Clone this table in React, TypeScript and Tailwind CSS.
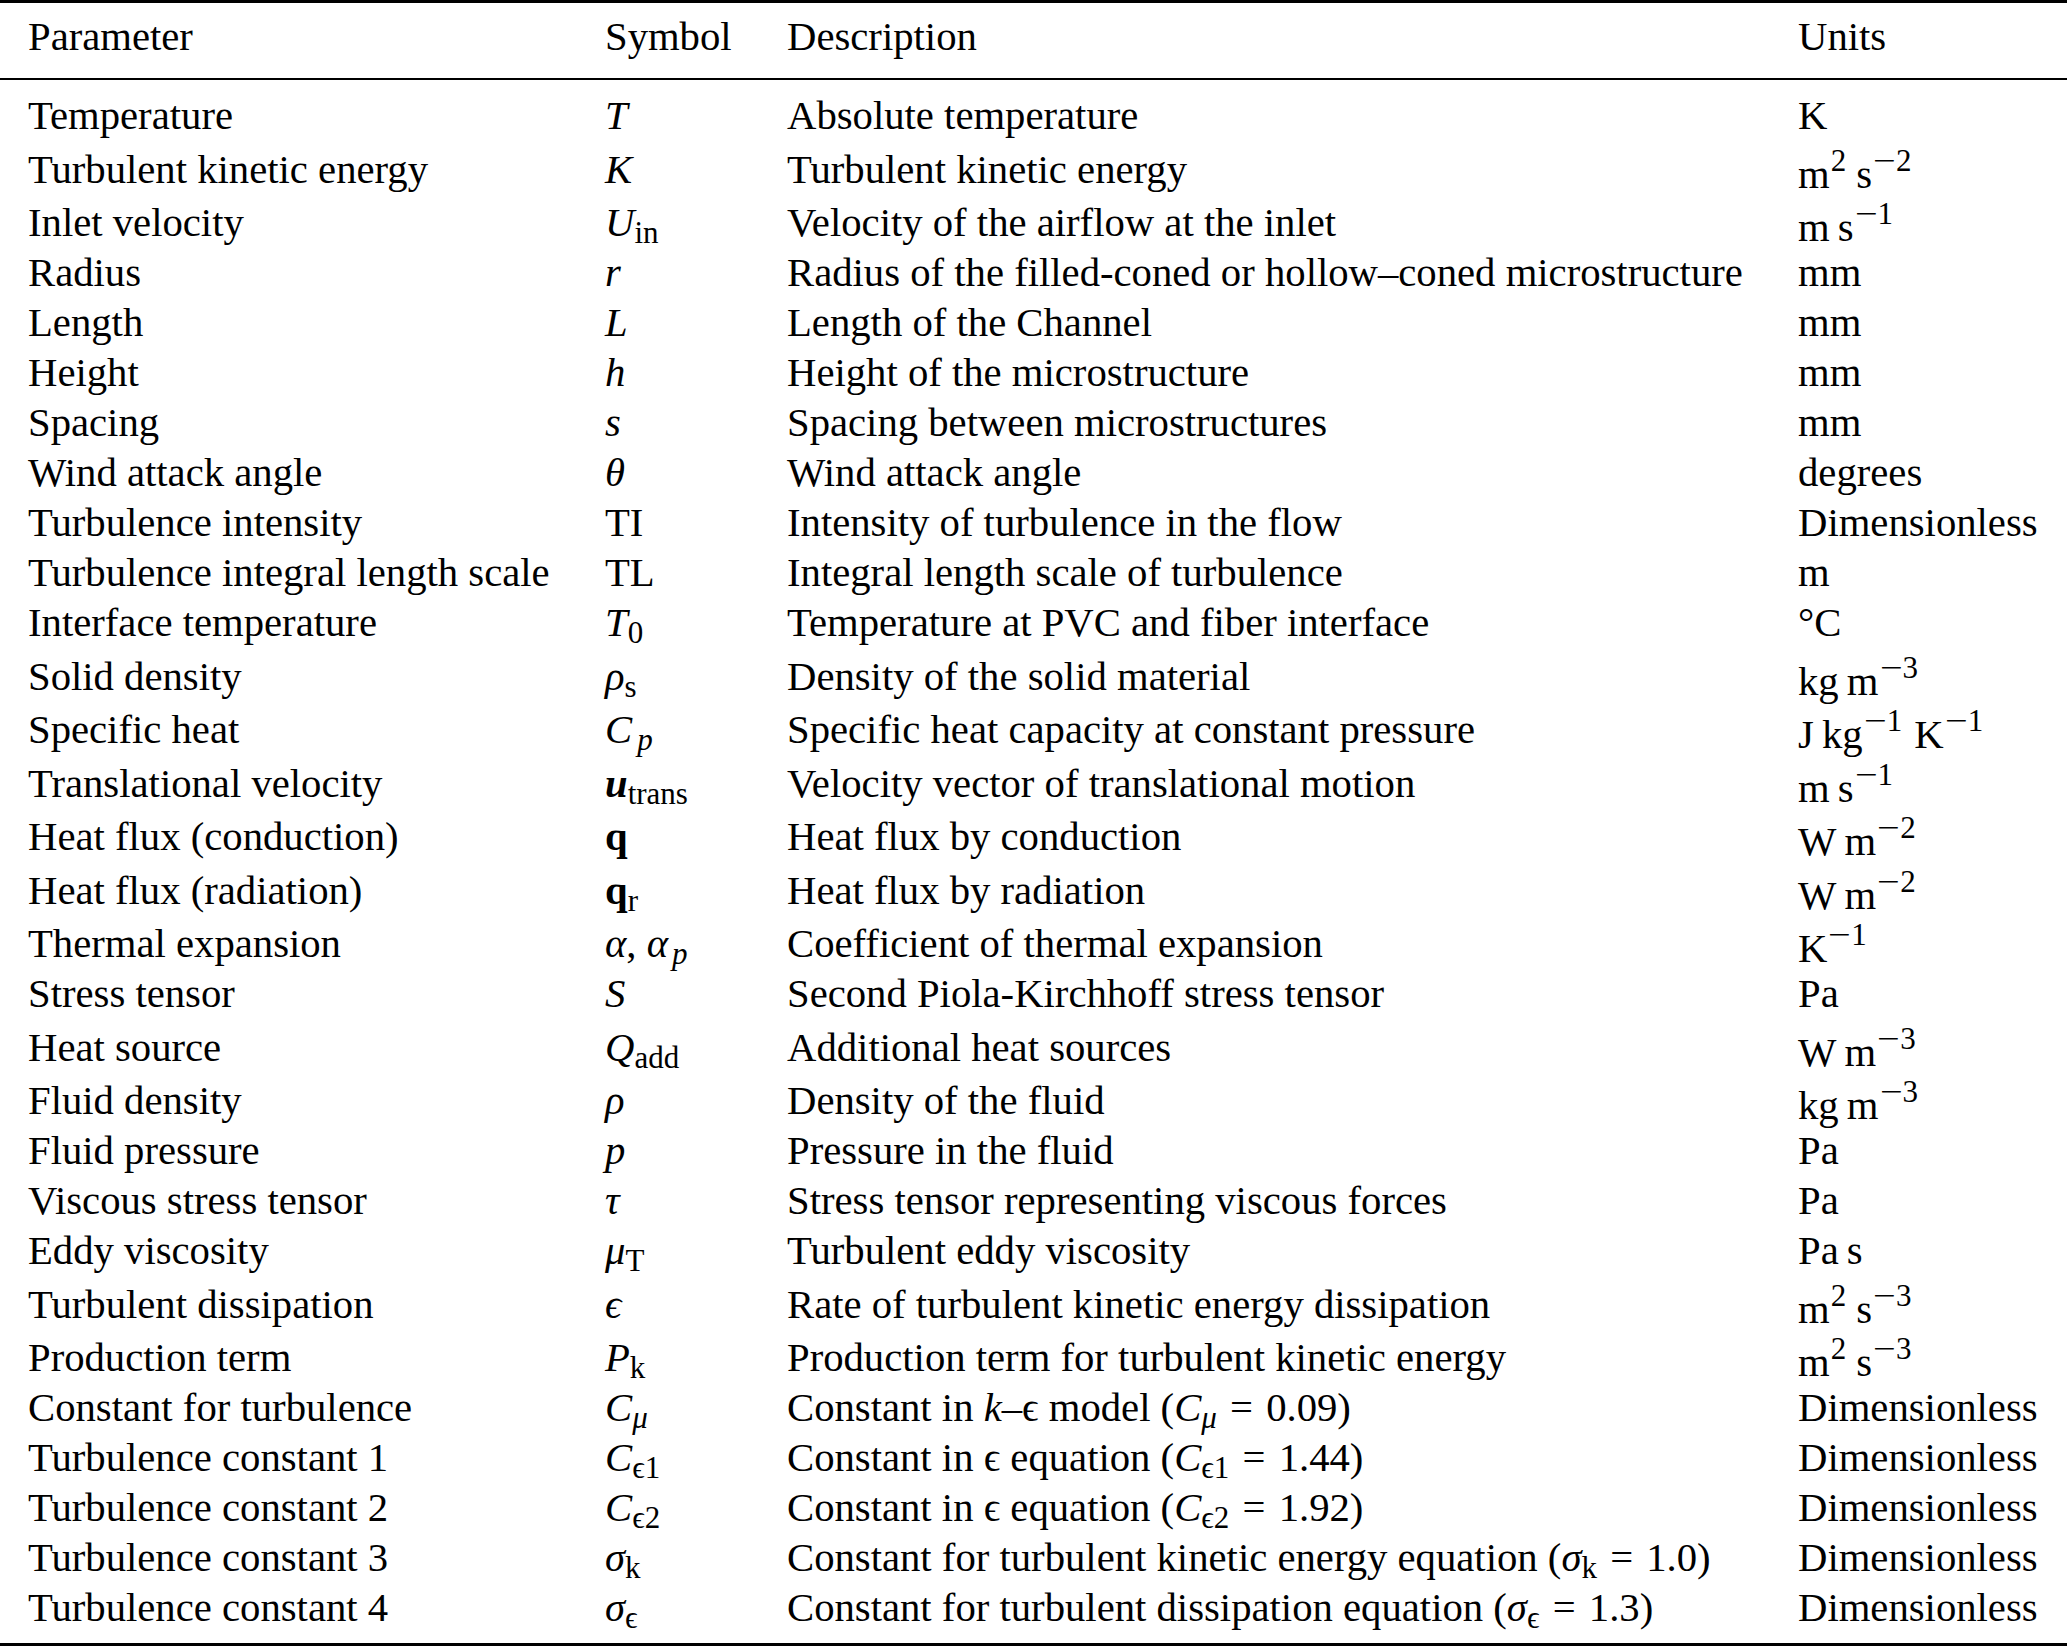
import type { ReactNode } from "react"

// math helpers
function M({ children }: { children: ReactNode }) {
  return <span className="italic">{children}</span>
}

function Sub({ children }: { children: ReactNode }) {
  return <span className="not-italic text-[31px] leading-none align-[-7px] pr-[2px]">{children}</span>
}

function Sup({ children }: { children: ReactNode }) {
  return <span className="not-italic text-[31px] leading-none align-[17px] pl-[1px] pr-[2px]">{children}</span>
}

// TeX minus is a longer bar than the font's
function Minus() {
  return <span className="inline-block w-[0.74em] scale-x-130 text-center">−</span>
}

function Eq({ children }: { children: ReactNode }) {
  return (
    <>
      <span className="pl-[1px] pr-[3px]"> = </span>
      {children}
    </>
  )
}

const eps = "\u03F5"
const thin = "\u2009"

interface RowData {
  param: string
  symbol: ReactNode
  desc: ReactNode
  units: ReactNode
  tall?: boolean
}

const rows: RowData[] = [
  { param: "Temperature", symbol: <M>T</M>, desc: "Absolute temperature", units: "K" },
  {
    param: "Turbulent kinetic energy",
    symbol: <M>K</M>,
    desc: "Turbulent kinetic energy",
    units: (
      <>
        m<Sup>2</Sup>
        {thin}s
        <Sup>
          <Minus />2
        </Sup>
      </>
    ),
    tall: true,
  },
  {
    param: "Inlet velocity",
    symbol: (
      <>
        <M>U</M>
        <Sub>in</Sub>
      </>
    ),
    desc: "Velocity of the airflow at the inlet",
    units: (
      <>
        m{thin}s
        <Sup>
          <Minus />1
        </Sup>
      </>
    ),
    tall: true,
  },
  { param: "Radius", symbol: <M>r</M>, desc: "Radius of the filled-coned or hollow–coned microstructure", units: "mm" },
  { param: "Length", symbol: <M>L</M>, desc: "Length of the Channel", units: "mm" },
  { param: "Height", symbol: <M>h</M>, desc: "Height of the microstructure", units: "mm" },
  { param: "Spacing", symbol: <M>s</M>, desc: "Spacing between microstructures", units: "mm" },
  { param: "Wind attack angle", symbol: <M>θ</M>, desc: "Wind attack angle", units: "degrees" },
  { param: "Turbulence intensity", symbol: "TI", desc: "Intensity of turbulence in the flow", units: "Dimensionless" },
  { param: "Turbulence integral length scale", symbol: "TL", desc: "Integral length scale of turbulence", units: "m" },
  {
    param: "Interface temperature",
    symbol: (
      <>
        <M>T</M>
        <Sub>0</Sub>
      </>
    ),
    desc: "Temperature at PVC and fiber interface",
    units: "°C",
  },
  {
    param: "Solid density",
    symbol: (
      <>
        <M>ρ</M>
        <Sub>s</Sub>
      </>
    ),
    desc: "Density of the solid material",
    units: (
      <>
        kg{thin}m
        <Sup>
          <Minus />3
        </Sup>
      </>
    ),
    tall: true,
  },
  {
    param: "Specific heat",
    symbol: (
      <>
        <M>C</M>
        <Sub>
          <span className="italic pl-[5px]">p</span>
        </Sub>
      </>
    ),
    desc: "Specific heat capacity at constant pressure",
    units: (
      <>
        J{thin}kg
        <Sup>
          <Minus />1
        </Sup>{" "}
        K
        <Sup>
          <Minus />1
        </Sup>
      </>
    ),
    tall: true,
  },
  {
    param: "Translational velocity",
    symbol: (
      <>
        <span className="italic font-bold">u</span>
        <Sub>trans</Sub>
      </>
    ),
    desc: "Velocity vector of translational motion",
    units: (
      <>
        m{thin}s
        <Sup>
          <Minus />1
        </Sup>
      </>
    ),
    tall: true,
  },
  {
    param: "Heat flux (conduction)",
    symbol: <span className="font-bold">q</span>,
    desc: "Heat flux by conduction",
    units: (
      <>
        W{thin}m
        <Sup>
          <Minus />2
        </Sup>
      </>
    ),
    tall: true,
  },
  {
    param: "Heat flux (radiation)",
    symbol: (
      <>
        <span className="font-bold">q</span>
        <Sub>r</Sub>
      </>
    ),
    desc: "Heat flux by radiation",
    units: (
      <>
        W{thin}m
        <Sup>
          <Minus />2
        </Sup>
      </>
    ),
    tall: true,
  },
  {
    param: "Thermal expansion",
    symbol: (
      <>
        <M>α</M>, <M>α</M>
        <Sub>
          <span className="italic pl-[4px]">p</span>
        </Sub>
      </>
    ),
    desc: "Coefficient of thermal expansion",
    units: (
      <>
        K
        <Sup>
          <Minus />1
        </Sup>
      </>
    ),
    tall: true,
  },
  { param: "Stress tensor", symbol: <M>S</M>, desc: "Second Piola-Kirchhoff stress tensor", units: "Pa" },
  {
    param: "Heat source",
    symbol: (
      <>
        <M>Q</M>
        <Sub>add</Sub>
      </>
    ),
    desc: "Additional heat sources",
    units: (
      <>
        W{thin}m
        <Sup>
          <Minus />3
        </Sup>
      </>
    ),
    tall: true,
  },
  {
    param: "Fluid density",
    symbol: <M>ρ</M>,
    desc: "Density of the fluid",
    units: (
      <>
        kg{thin}m
        <Sup>
          <Minus />3
        </Sup>
      </>
    ),
    tall: true,
  },
  { param: "Fluid pressure", symbol: <M>p</M>, desc: "Pressure in the fluid", units: "Pa" },
  { param: "Viscous stress tensor", symbol: <M>τ</M>, desc: "Stress tensor representing viscous forces", units: "Pa" },
  {
    param: "Eddy viscosity",
    symbol: (
      <>
        <M>μ</M>
        <Sub>T</Sub>
      </>
    ),
    desc: "Turbulent eddy viscosity",
    units: <>Pa{thin}s</>,
  },
  {
    param: "Turbulent dissipation",
    symbol: <M>{eps}</M>,
    desc: "Rate of turbulent kinetic energy dissipation",
    units: (
      <>
        m<Sup>2</Sup>
        {thin}s
        <Sup>
          <Minus />3
        </Sup>
      </>
    ),
    tall: true,
  },
  {
    param: "Production term",
    symbol: (
      <>
        <M>P</M>
        <Sub>k</Sub>
      </>
    ),
    desc: "Production term for turbulent kinetic energy",
    units: (
      <>
        m<Sup>2</Sup>
        {thin}s
        <Sup>
          <Minus />3
        </Sup>
      </>
    ),
    tall: true,
  },
  {
    param: "Constant for turbulence",
    symbol: (
      <>
        <M>C</M>
        <Sub>
          <span className="italic">μ</span>
        </Sub>
      </>
    ),
    desc: (
      <>
        Constant in <M>k</M>–{eps} model (<M>C</M>
        <Sub>
          <span className="italic">μ</span>
        </Sub>
        <Eq>0.09)</Eq>
      </>
    ),
    units: "Dimensionless",
  },
  {
    param: "Turbulence constant 1",
    symbol: (
      <>
        <M>C</M>
        <Sub>{eps}1</Sub>
      </>
    ),
    desc: (
      <>
        Constant in {eps} equation (<M>C</M>
        <Sub>{eps}1</Sub>
        <Eq>1.44)</Eq>
      </>
    ),
    units: "Dimensionless",
  },
  {
    param: "Turbulence constant 2",
    symbol: (
      <>
        <M>C</M>
        <Sub>{eps}2</Sub>
      </>
    ),
    desc: (
      <>
        Constant in {eps} equation (<M>C</M>
        <Sub>{eps}2</Sub>
        <Eq>1.92)</Eq>
      </>
    ),
    units: "Dimensionless",
  },
  {
    param: "Turbulence constant 3",
    symbol: (
      <>
        <M>σ</M>
        <Sub>k</Sub>
      </>
    ),
    desc: (
      <>
        Constant for turbulent kinetic energy equation (<M>σ</M>
        <Sub>k</Sub>
        <Eq>1.0)</Eq>
      </>
    ),
    units: "Dimensionless",
  },
  {
    param: "Turbulence constant 4",
    symbol: (
      <>
        <M>σ</M>
        <Sub>{eps}</Sub>
      </>
    ),
    desc: (
      <>
        Constant for turbulent dissipation equation (<M>σ</M>
        <Sub>{eps}</Sub>
        <Eq>1.3)</Eq>
      </>
    ),
    units: "Dimensionless",
  },
]

function Row({ cells, tall }: { cells: ReactNode[]; tall?: boolean }) {
  return (
    <div
      className={`grid grid-cols-[577px_182px_1011px_1fr] items-end pl-[28px] ${
        tall ? "h-[53.5px]" : "h-[50px]"
      }`}
    >
      {cells.map((c, i) => (
        <div key={i} className="h-[50px] whitespace-nowrap leading-[50px]">
          {c}
        </div>
      ))}
    </div>
  )
}

export default function App() {
  return (
    <div className="w-[2067px] bg-white text-black text-[40.7px] font-['Liberation_Serif','DejaVu_Serif',serif]">
      <div className="h-[3px] bg-black" />
      <div className="mt-[9px]">
        <Row cells={["Parameter", "Symbol", "Description", "Units"]} />
      </div>
      <div className="mt-[16px] h-[2px] bg-black" />
      <div className="mt-[11px] flex flex-col">
        {rows.map((r) => (
          <Row key={r.param} cells={[r.param, r.symbol, r.desc, r.units]} tall={r.tall} />
        ))}
      </div>
      <div className="mt-[10px] h-[3px] bg-black" />
    </div>
  )
}
